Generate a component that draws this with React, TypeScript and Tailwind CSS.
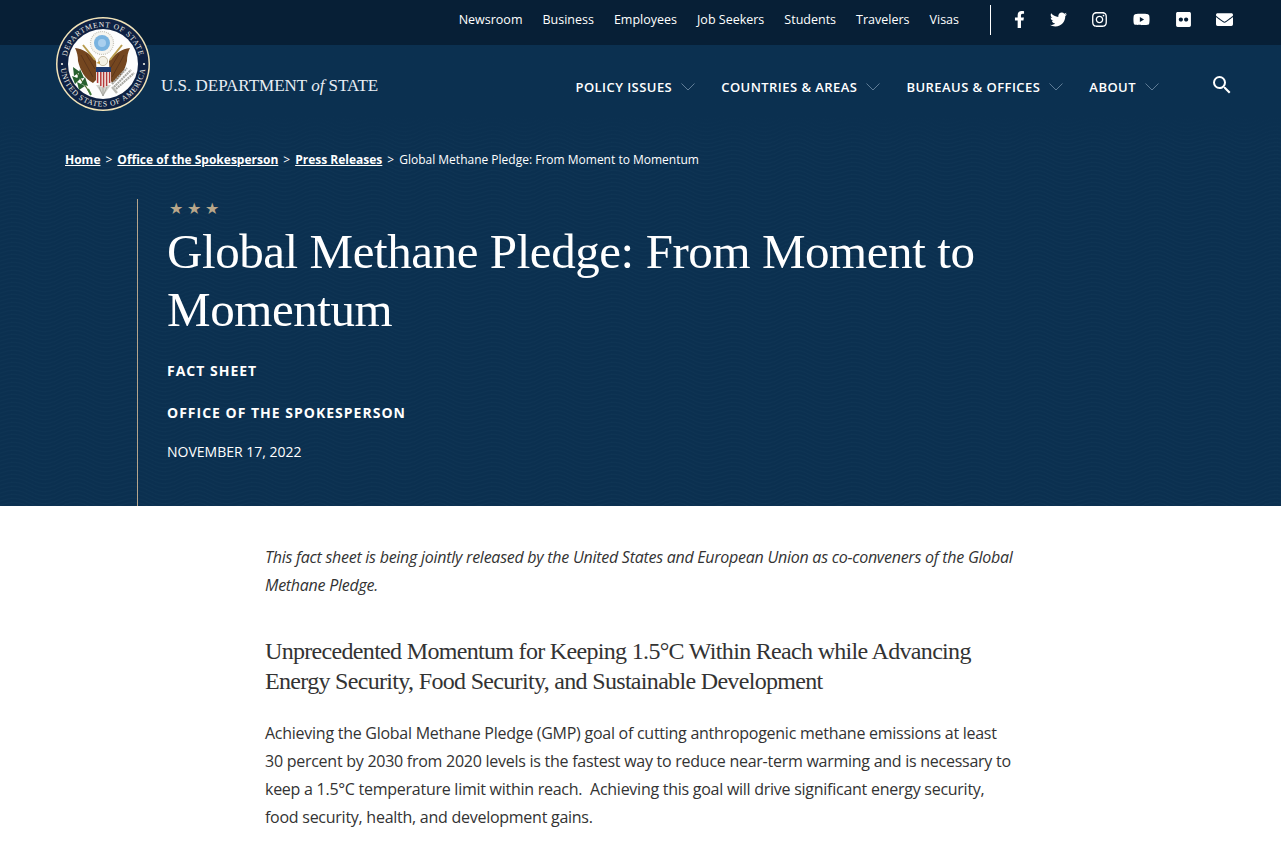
import { FaFacebookF, FaTwitter, FaInstagram, FaYoutube, FaFlickr, FaEnvelope } from 'react-icons/fa';
import { MdSearch } from 'react-icons/md';

const topLinks = ['Newsroom', 'Business', 'Employees', 'Job Seekers', 'Students', 'Travelers', 'Visas'];
const navItems = ['Policy Issues', 'Countries & Areas', 'Bureaus & Offices', 'About'];

const sans = "font-['Open_Sans',sans-serif]";
const serif = "font-['Liberation_Serif',serif]";

function Chevron() {
  return (
    <svg width="14" height="8" viewBox="0 0 14 8" fill="none" className="ml-[9px] mt-[-1px]">
      <path d="M0.5 0.5 L7 7 L13.5 0.5" stroke="#5f7c96" strokeWidth="1" />
    </svg>
  );
}

function Seal() {
  return (
    <svg width="94" height="94" viewBox="0 0 94 94" className="block">
      <defs>
        <path id="sealTop" d="M47 47 m-37 0 a37 37 0 0 1 74 0" />
        <path id="sealBottom" d="M47 47 m-42.5 0 a42.5 42.5 0 0 0 85 0" />
      </defs>
      <circle cx="47" cy="47" r="47" fill="#f1e3b8" />
      <circle cx="47" cy="47" r="45.5" fill="#0e2143" />
      <circle cx="47" cy="47" r="35" fill="#fdfdfd" />
      <text fontFamily="'Liberation Serif', serif" fontSize="7.6" fill="#f1efe6" letterSpacing="0.8">
        <textPath href="#sealTop" startOffset="50%" textAnchor="middle">DEPARTMENT OF STATE</textPath>
      </text>
      <text fontFamily="'Liberation Serif', serif" fontSize="7.6" fill="#f1efe6" letterSpacing="0.8">
        <textPath href="#sealBottom" startOffset="50%" textAnchor="middle">UNITED STATES OF AMERICA</textPath>
      </text>
      <circle cx="6" cy="47" r="1.1" fill="#f1efe6" />
      <circle cx="88" cy="47" r="1.1" fill="#f1efe6" />
      {/* glory */}
      <circle cx="46" cy="26" r="11.5" fill="#f6f5f0" stroke="#c6c4ba" strokeWidth="1.2" strokeDasharray="1 1" />
      <circle cx="46" cy="26" r="8" fill="#79b3e0" />
      <circle cx="46" cy="26" r="4" fill="#a9cfee" />
      {/* wings */}
      <path d="M19 31 C27 32 34 36 40 44 L41 62 L37 66 C29 62 24 53 22 44 C22 39 21 35 19 31Z" fill="#74461f" />
      <path d="M74 31 C66 32 59 36 53 44 L54 62 L56 66 C64 62 69 53 71 44 C71 39 72 35 74 31Z" fill="#74461f" />
      <path d="M25 38 L37 60 M30 37 L39 52 M68 38 L56 60 M63 37 L54 52" stroke="#57321a" strokeWidth="0.8" />
      {/* gold rays */}
      <path d="M27 28 L39 43 M66 28 L54 43" stroke="#b99c4e" strokeWidth="2" />
      {/* head */}
      <circle cx="47" cy="44" r="4.6" fill="#f4f1e6" stroke="#9b8a63" strokeWidth="0.5" />
      <path d="M44 44 L40 46 L44 47Z" fill="#c9a24a" />
      {/* tail */}
      <path d="M40 68 L47 79 L55 68Z" fill="#d2d2cc" />
      <path d="M43 70 L47 79 M47 70 V79 M51 70 L47 79" stroke="#8e8e88" strokeWidth="0.6" />
      {/* shield */}
      <path d="M40 50 H55 V63 C55 67 50 69 47.5 71 C45 69 40 67 40 63Z" fill="#f4f2ef" />
      <path d="M40 50 H55 V55 H40Z" fill="#1d3a70" />
      <path d="M41.6 55 V66 M44.8 55 V69 M47.6 55 V70.5 M50.6 55 V69 M53.6 55 V66" stroke="#b5393a" strokeWidth="1.5" />
      {/* olive branch */}
      <path d="M18 52 L34 76" stroke="#4c6a28" strokeWidth="1.2" />
      <path d="M17 50 L24 55 L18 59Z M24 52 L28 61 L21 62Z M16 59 L24 62 L19 67Z M29 60 L32 69 L25 67Z M21 65 L29 69 L23 73Z" fill="#26602e" />
      <path d="M32 72 L35 78" stroke="#3e7a38" strokeWidth="2" />
      {/* arrows */}
      <path d="M58 70 L75 53 M60 72 L78 56 M56 67 L71 51" stroke="#a9a9a4" strokeWidth="2.2" strokeDasharray="2 0.6" />
      <path d="M56 70 L61 76" stroke="#b9b9b3" strokeWidth="2.4" />
    </svg>
  );
}

function WavePattern() {
  return (
    <svg className="absolute inset-0 h-full w-full" aria-hidden="true">
      <defs>
        <pattern id="waves" width="120" height="24" patternUnits="userSpaceOnUse">
          <g fill="none" stroke="#3a6486" strokeOpacity="0.07" strokeWidth="1">
            <path d="M-4 2 C30 -14 30 18 60 2 S90 18 124 2" />
            <path d="M-4 6 C30 -10 30 22 60 6 S90 22 124 6" />
            <path d="M-4 10 C30 -6 30 26 60 10 S90 26 124 10" />
            <path d="M-4 14 C30 -2 30 30 60 14 S90 30 124 14" />
            <path d="M-4 18 C30 2 30 34 60 18 S90 34 124 18" />
            <path d="M-4 22 C30 6 30 38 60 22 S90 38 124 22" />
            <path d="M-4 -2 C30 -18 30 14 60 -2 S90 14 124 -2" />
            <path d="M-4 26 C30 10 30 42 60 26 S90 42 124 26" />
          </g>
        </pattern>
      </defs>
      <rect width="100%" height="100%" fill="url(#waves)" />
    </svg>
  );
}

export default function App() {
  return (
    <div className={`${sans} h-[851px] overflow-hidden bg-white text-[#333]`}>
      {/* Top bar */}
      <div className="flex h-[45px] items-center justify-end bg-[#071f36] pb-[5px] pr-[48px] text-white">
        <div className="flex gap-[20px] text-[12.5px]">
          {topLinks.map((link) => (
            <a key={link}>{link}</a>
          ))}
        </div>
        <div className="ml-[31px] mr-[20px] h-[30px] w-px bg-white" />
        <div className="mt-[-2px] flex items-center gap-[24px] text-[17px]">
          <FaFacebookF className="mr-[-2px]" />
          <FaTwitter />
          <FaInstagram className="mr-[1px]" />
          <FaYoutube className="mr-[1px]" />
          <FaFlickr />
          <FaEnvelope />
        </div>
      </div>

      {/* Hero */}
      <div className="relative h-[461px] bg-[#0b3050] text-white">
        <WavePattern />
        <div className="absolute inset-x-0 top-0 h-[100px] bg-linear-to-b from-[#0b3050] from-70% to-transparent" />
        <div className="absolute left-[56px] top-[-28px]">
          <Seal />
        </div>
        <div className="relative flex h-[85px] items-center pl-[161px] pr-[47px]">
          <div className={`${serif} mt-[-4px] text-[17px] text-[#e8eef4]`}>
            U.S. DEPARTMENT <em>of</em> STATE
          </div>
          <div className="ml-auto flex items-center">
            {navItems.map((item) => (
              <div key={item} className="mr-[26px] flex items-center text-[13px] font-semibold tracking-[0.45px] uppercase">
                {item}
                <Chevron />
              </div>
            ))}
            <MdSearch className="ml-[25px] mt-[-6px] text-[24px]" />
          </div>
        </div>
        <div className="relative mt-[21px] pl-[65px] text-[12px] leading-[18px]">
          <a className="font-bold underline">Home</a>
          <span className="mx-[5px]">&gt;</span>
          <a className="font-bold underline">Office of the Spokesperson</a>
          <span className="mx-[5px]">&gt;</span>
          <a className="font-bold underline">Press Releases</a>
          <span className="mx-[5px]">&gt;</span>
          Global Methane Pledge: From Moment to Momentum
        </div>
        <div className="relative ml-[137px] mt-[30px] h-[307px] border-l border-[#b5a58c] pl-[29px]">
          <div className="pl-[2px] text-[16px] leading-[18px] tracking-[3.8px] text-[#b9a78a]">★★★</div>
          <h1 className={`${serif} mt-[6px] w-[850px] text-[49px] leading-[58px] tracking-[-0.43px]`}>
            Global Methane Pledge: From Moment to Momentum
          </h1>
          <div className="mt-[22px] text-[14px] font-bold tracking-[1px] uppercase leading-[20px]">Fact Sheet</div>
          <div className="mt-[22px] text-[14px] font-bold tracking-[1px] uppercase leading-[20px]">Office of the Spokesperson</div>
          <div className="mt-[19px] text-[14px] leading-[20px]">NOVEMBER 17, 2022</div>
        </div>
      </div>

      {/* Article */}
      <div className="ml-[265px] w-[750px] pt-[37px] text-[16px] leading-[28px] tracking-[-0.26px] text-[#333]">
        <p className="italic">
          This fact sheet is being jointly released by the United States and European Union as co-conveners of the Global Methane Pledge.
        </p>
        <h2 className={`${serif} mt-[37px] text-[24px] leading-[30px] tracking-[-0.68px]`}>
          Unprecedented Momentum for Keeping 1.5°C Within Reach while Advancing Energy Security, Food Security, and Sustainable Development
        </h2>
        <p className="mt-[23px]">
          Achieving the Global Methane Pledge (GMP) goal of cutting anthropogenic methane emissions at least 30 percent by 2030 from 2020 levels is the fastest way to reduce near-term warming and is necessary to keep a 1.5°C temperature limit within reach.&nbsp; Achieving this goal will drive significant energy security, food security, health, and development gains.
        </p>
      </div>
    </div>
  );
}
